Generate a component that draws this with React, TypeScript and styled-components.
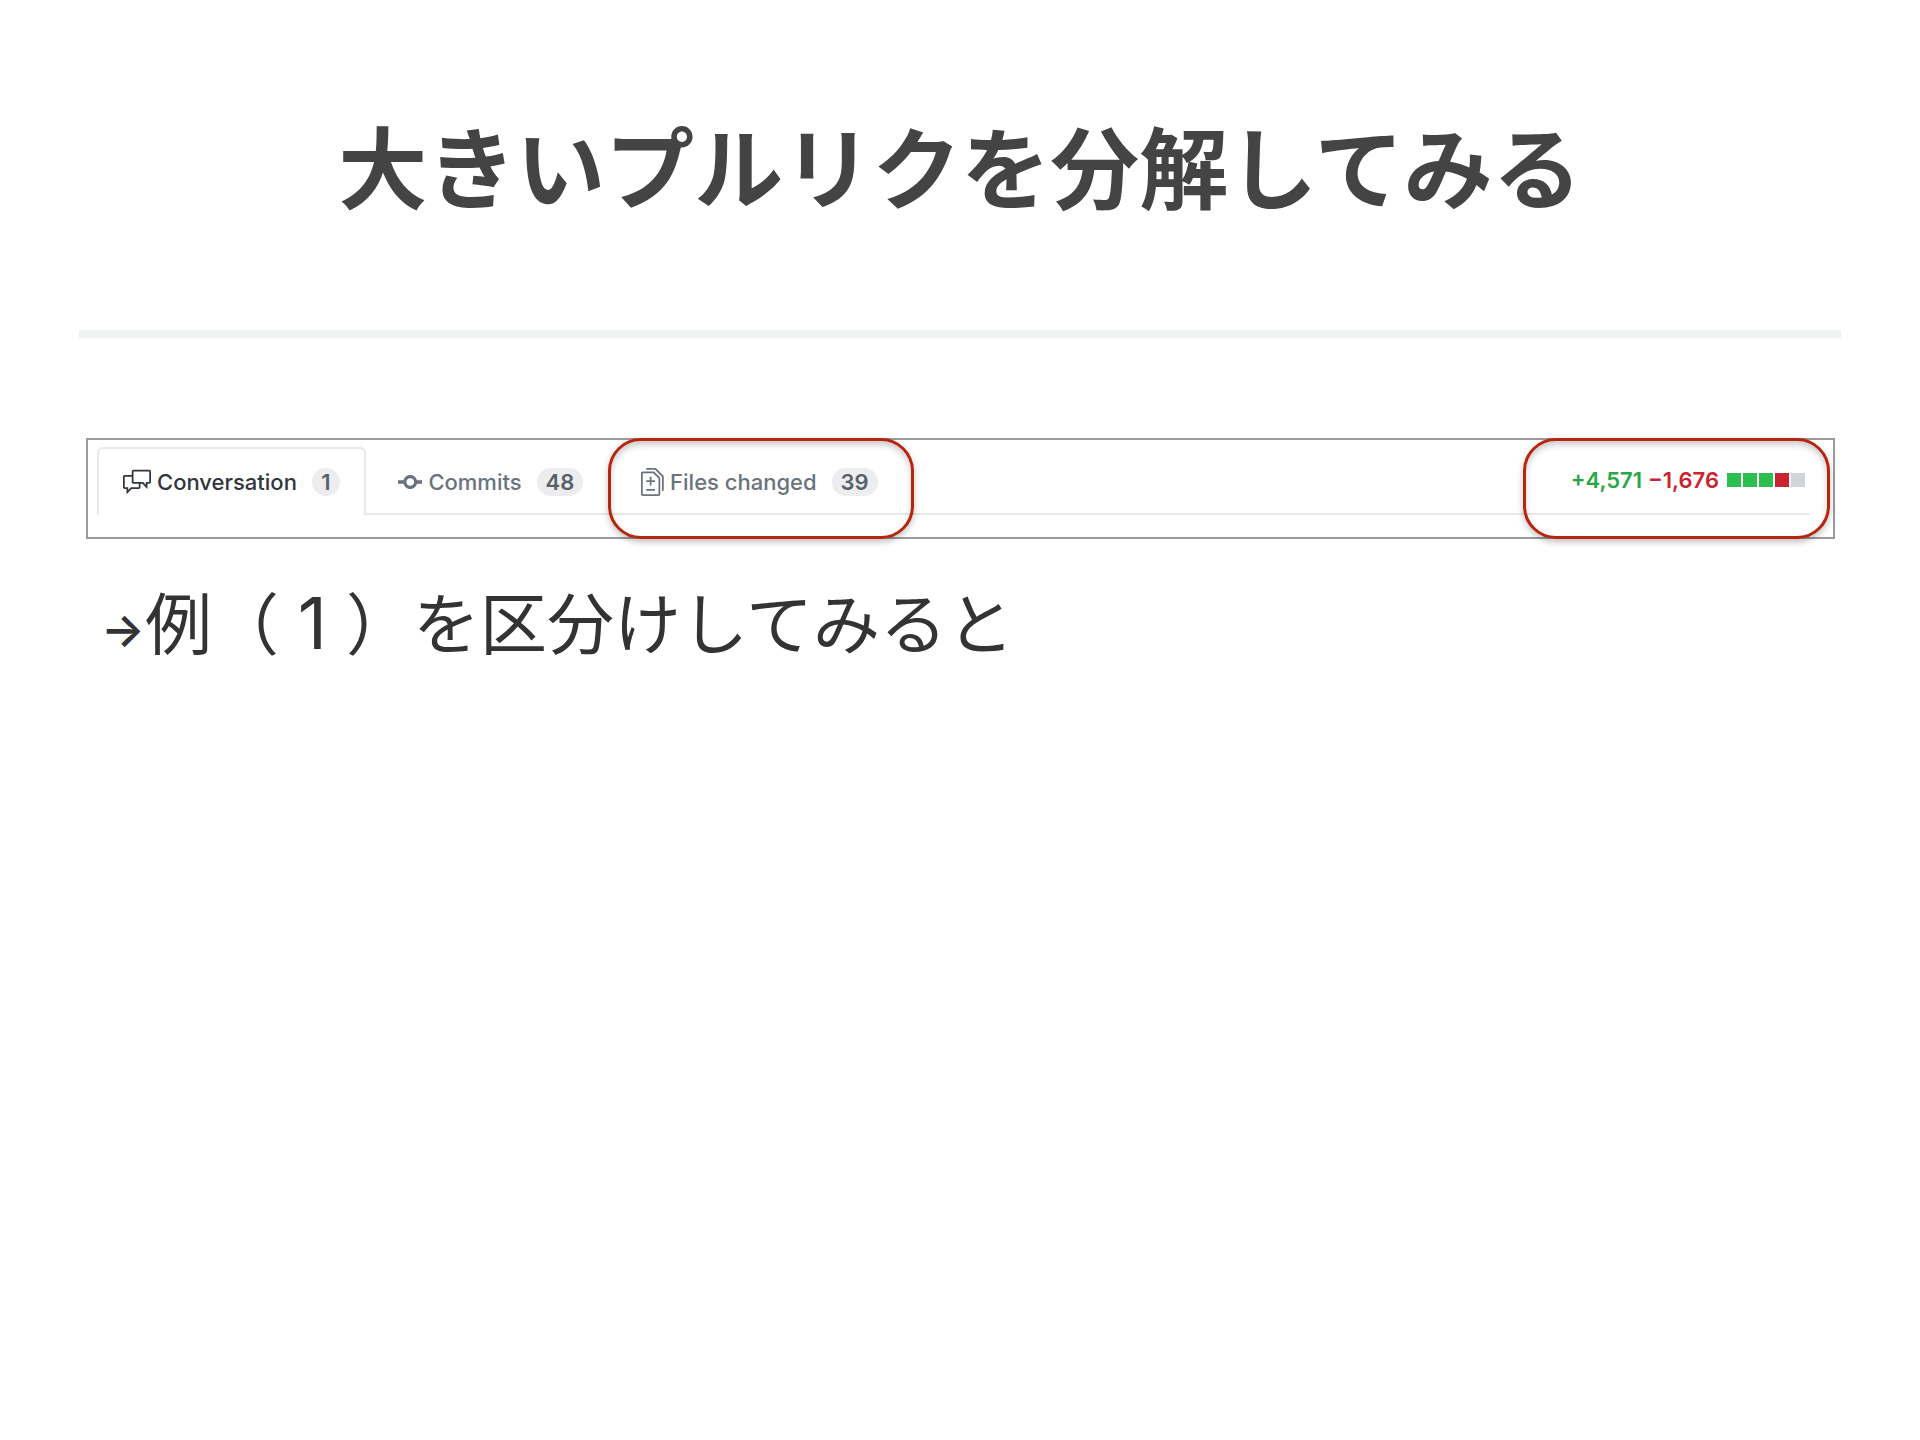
import React from "react";
import styled, { createGlobalStyle } from "styled-components";

const GlobalStyle = createGlobalStyle`
  * { box-sizing: border-box; }
  body { margin: 0; background: #fff; }
`;

const Slide = styled.main`
  display: flex;
  flex-direction: column;
  min-height: 100vh;
  padding: 100px 79px 80px;
  font-family: Inter, "Noto Sans CJK JP", sans-serif;
`;

const Title = styled.h1`
  margin: 0;
  padding-bottom: 102px;
  border-bottom: 8px solid #eff2f2;
  color: #444;
  font-family: "Noto Sans CJK JP", sans-serif;
  font-size: 89px;
  font-weight: 700;
  line-height: 128px;
  text-align: center;
`;

const Panel = styled.section`
  margin: 100px 6px 0 7px;
  padding: 7px 23px 22px 9px;
  border: 2px solid #9c9c9c;
`;

const TabBar = styled.nav`
  display: flex;
  gap: 6px;
  height: 68px;
  border-bottom: 2px solid #e7e8ea;
`;

const Tab = styled.button<{ $active?: boolean }>`
  position: relative;
  display: flex;
  align-items: center;
  height: ${(p) => (p.$active ? "68px" : "66px")};
  padding: ${(p) => (p.$active ? "0 24px" : "2px 24px 0")};
  border: 2px solid ${(p) => (p.$active ? "#e7e8ea" : "transparent")};
  border-bottom: 0;
  border-radius: 6px 6px 0 0;
  background: ${(p) => (p.$active ? "#fff" : "none")};
  color: ${(p) => (p.$active ? "#2f363d" : "#6a737d")};
  font-family: Inter, sans-serif;
  font-size: 22px;
  font-weight: 500;
  line-height: 28px;
  white-space: nowrap;
`;

const Icon = styled.svg`
  height: 28px;
  margin-right: 6px;
  fill: currentColor;
`;

const Count = styled.span`
  min-width: 28px;
  margin-left: 15px;
  padding: 0 9px;
  border-radius: 14px;
  background: #ededef;
  color: #586069;
  font-weight: 600;
`;

const DiffStat = styled.div`
  position: relative;
  display: flex;
  align-items: center;
  gap: 6px;
  margin-left: auto;
  padding: 0 5px 2px 0;
  border-top: 2px solid transparent;
  font-size: 22px;
  font-weight: 600;
  line-height: 28px;
`;

const Added = styled.span`
  color: #28a745;
`;

const Removed = styled.span`
  color: #cb2431;
`;

const Blocks = styled.span`
  display: flex;
  gap: 2px;
  padding-left: 2px;
`;

const Block = styled.span<{ $color: string }>`
  width: 14px;
  height: 14px;
  background: ${(p) => p.$color};
`;

const Ring = styled.span<{ $left: number; $right: number }>`
  position: absolute;
  top: -11px;
  right: ${(p) => p.$right}px;
  bottom: -26px;
  left: ${(p) => p.$left}px;
  border: 3px solid #b5260f;
  border-radius: 33px;
  box-shadow: 0 3px 6px rgba(0, 0, 0, 0.25), inset 0 4px 6px rgba(0, 0, 0, 0.2);
  pointer-events: none;
`;

const Lead = styled.p`
  display: flex;
  align-items: center;
  margin: 24px 0 0 22px;
  color: #333;
  font-family: "Noto Sans CJK JP", sans-serif;
  font-size: 67px;
  line-height: 100px;
`;

const Arrow = styled.span`
  padding-top: 16px;
  font-family: Inter, sans-serif;
  font-size: 46px;
  font-weight: 600;
`;

const Digit = styled.span`
  display: inline-block;
  width: 67px;
  font-family: Inter, sans-serif;
  font-size: 72px;
  text-align: center;
`;

const blockColors = ["#2cbe4e", "#2cbe4e", "#2cbe4e", "#cb2431", "#d1d5da"];

export default function App() {
  return (
    <>
      <GlobalStyle />
      <Slide>
        <Title>大きいプルリクを分解してみる</Title>
        <Panel>
          <TabBar>
            <Tab type="button" $active>
              <Icon viewBox="0 0 16 16" aria-hidden="true">
                <path d="M15 1H6c-.55 0-1 .45-1 1v2H1c-.55 0-1 .45-1 1v6c0 .55.45 1 1 1h1v3l3-3h4c.55 0 1-.45 1-1V9h1l3 3V9h1c.55 0 1-.45 1-1V2c0-.55-.45-1-1-1zM9 11H4.5L3 12.5V11H1V5h4v3c0 .55.45 1 1 1h3v2zm6-3h-2v1.5L11.5 8H6V2h9v6z" />
              </Icon>
              Conversation
              <Count>1</Count>
            </Tab>
            <Tab type="button">
              <Icon viewBox="0 0 14 16" aria-hidden="true">
                <path d="M10.86 7c-.45-1.72-2-3-3.86-3-1.86 0-3.41 1.28-3.86 3H0v2h3.14c.45 1.72 2 3 3.86 3 1.86 0 3.41-1.28 3.86-3H14V7h-3.14zM7 10.2c-1.22 0-2.2-.98-2.2-2.2 0-1.22.98-2.2 2.2-2.2 1.22 0 2.2.98 2.2 2.2 0 1.22-.98 2.2-2.2 2.2z" />
              </Icon>
              Commits
              <Count>48</Count>
            </Tab>
            <Tab type="button">
              <Icon viewBox="0 0 13 16" aria-hidden="true">
                <path d="M6 7h2v1H6v2H5V8H3V7h2V5h1v2zm-3 6h5v-1H3v1zM7.5 2L11 5.5V15c0 .55-.45 1-1 1H1c-.55 0-1-.45-1-1V3c0-.55.45-1 1-1h6.5zM10 6L7 3H1v12h9V6zM8.5 0H3v1h5l4 4v8h1V4.5L8.5 0z" />
              </Icon>
              Files changed
              <Count>39</Count>
              <Ring $left={-9} $right={-12} />
            </Tab>
            <DiffStat>
              <Added>+4,571</Added>
              <Removed>−1,676</Removed>
              <Blocks>
                {blockColors.map((color, i) => (
                  <Block key={i} $color={color} />
                ))}
              </Blocks>
              <Ring $left={-48} $right={-20} />
            </DiffStat>
          </TabBar>
        </Panel>
        <Lead>
          <Arrow>→</Arrow>
          <span>
            例（<Digit>1</Digit>）を区分けしてみると
          </span>
        </Lead>
      </Slide>
    </>
  );
}
